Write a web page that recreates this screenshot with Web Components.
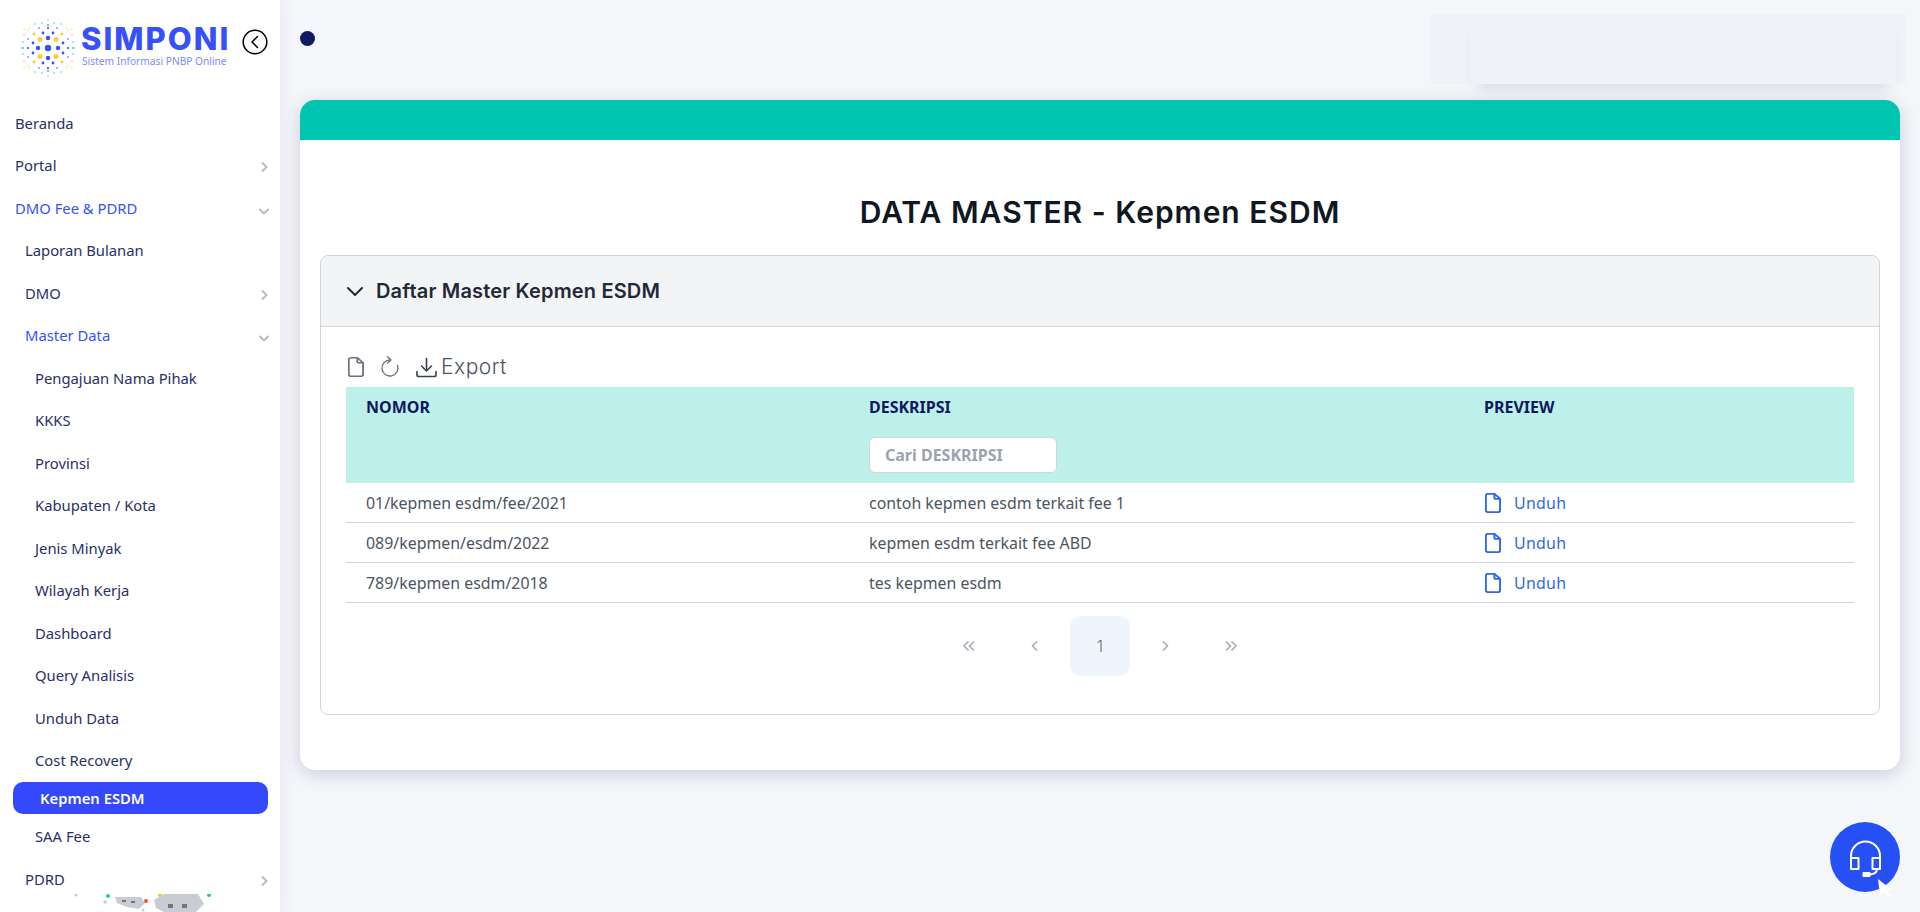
<!DOCTYPE html>
<html lang="id">
<head>
<meta charset="utf-8">
<title>SIMPONI - Kepmen ESDM</title>
<style>
  html, body { margin: 0; height: 912px; overflow: hidden; background: #f5f6fa; }
  body { font-family: "Noto Sans", "Open Sans", sans-serif; }
</style>
</head>
<body>
<app-shell>
  <side-bar slot="side">
    <brand-logo></brand-logo>
    <nav-item>Beranda</nav-item>
    <nav-item arrow="right">Portal</nav-item>
    <nav-item arrow="down" open>DMO Fee &amp; PDRD</nav-item>
    <nav-item level="1">Laporan Bulanan</nav-item>
    <nav-item level="1" arrow="right">DMO</nav-item>
    <nav-item level="1" arrow="down" open>Master Data</nav-item>
    <nav-item level="2">Pengajuan Nama Pihak</nav-item>
    <nav-item level="2">KKKS</nav-item>
    <nav-item level="2">Provinsi</nav-item>
    <nav-item level="2">Kabupaten / Kota</nav-item>
    <nav-item level="2">Jenis Minyak</nav-item>
    <nav-item level="2">Wilayah Kerja</nav-item>
    <nav-item level="2">Dashboard</nav-item>
    <nav-item level="2">Query Analisis</nav-item>
    <nav-item level="2">Unduh Data</nav-item>
    <nav-item level="2">Cost Recovery</nav-item>
    <nav-item level="2" active>Kepmen ESDM</nav-item>
    <nav-item level="2">SAA Fee</nav-item>
    <nav-item level="1" arrow="right">PDRD</nav-item>
  </side-bar>
  <top-bar></top-bar>
  <main-card heading="DATA MASTER - Kepmen ESDM">
    <collapse-panel heading="Daftar Master Kepmen ESDM">
      <table-tools></table-tools>
      <table-head></table-head>
      <data-row nomor="01/kepmen esdm/fee/2021" deskripsi="contoh kepmen esdm terkait fee 1"></data-row>
      <data-row nomor="089/kepmen/esdm/2022" deskripsi="kepmen esdm terkait fee ABD"></data-row>
      <data-row nomor="789/kepmen esdm/2018" deskripsi="tes kepmen esdm"></data-row>
      <page-nav></page-nav>
    </collapse-panel>
  </main-card>
  <support-button></support-button>
</app-shell>

<script>
const FILE_PATH = 'M7.5 2.8h5.6L18 7.7v11.5a2 2 0 0 1-2 2H7.5a2 2 0 0 1-2-2V4.8a2 2 0 0 1 2-2z';
const FOLD_PATH = 'M13 3v3.4a1.4 1.4 0 0 0 1.4 1.4H18';

function define(name, markup, setup) {
  const template = document.createElement('template');
  template.innerHTML = markup;
  customElements.define(name, class extends HTMLElement {
    constructor() {
      super();
      this.attachShadow({ mode: 'open' });
      this.shadowRoot.appendChild(document.importNode(template.content, true));
    }
    connectedCallback() {
      if(setup) setup(this, this.shadowRoot);
    }
  });
}

define('app-shell', /* html */ `
  <style>
    :host { display: grid; grid-template-columns: 280px 1fr; grid-template-rows: 100px auto; height: 912px; }
    ::slotted([slot=side]) { grid-row: 1 / 3; }
    .side { grid-row: 1 / 3; display: block; }
    .rest { display: contents; }
  </style>
  <slot name="side" class="side"></slot>
  <slot class="rest"></slot>
`);

define('side-bar', /* html */ `
  <style>
    :host { display: flex; flex-direction: column; height: 912px; background: #fff; box-shadow: 0 0 18px rgba(40, 45, 90, .08); position: relative; z-index: 2; }
    .list { flex: 1; overflow: hidden; }
    .decor { flex: none; height: 18px; display: block; }
  </style>
  <div class="list"><slot></slot></div>
  <svg class="decor" width="280" height="18" viewBox="0 0 280 18">
    <g fill="#c9ccd2">
      <circle cx="76" cy="1" r="1.5"/><circle cx="105" cy="8" r="1.8"/><circle cx="143" cy="16" r="1.6"/>
      <path d="M115 3h26l4 6-6 6-12-2-10-4z"/>
      <path d="M154 6l10-6h34l6 10-8 8h-32l-8-4z"/>
    </g>
    <g fill="#6f7680">
      <rect x="122" y="6" width="4" height="2"/><rect x="131" y="7" width="4" height="2"/>
      <rect x="168" y="10" width="5" height="4"/><rect x="182" y="10" width="5" height="4"/>
    </g>
    <circle cx="108" cy="2" r="2" fill="#14cfb4"/>
    <circle cx="146" cy="7" r="2" fill="#f0562e"/>
    <circle cx="160" cy="1" r="2" fill="#f5c518"/>
    <circle cx="209" cy="1" r="2" fill="#14cfb4"/>
  </svg>
`);

define('brand-logo', /* html */ `
  <style>
    :host { display: flex; height: 101.5px; box-sizing: border-box; padding: 19px 0 0 19px; }
    svg.mark { flex: none; width: 58px; height: 58px; }
    .name { margin-left: 4px; padding-top: 6px; width: 150px; }
    .big { font: 800 31px/28px Inter, sans-serif; color: #3650fb; letter-spacing: 2px; white-space: nowrap; }
    .small { font: 400 10.2px/14px "Noto Sans", sans-serif; color: #7c8dfb; margin: 1px 0 0 1px; white-space: nowrap; }
    .back { flex: none; margin: 10px 0 0 11px; width: 26px; height: 26px; }
  </style>
  <svg class="mark" viewBox="-29 -29 58 58"></svg>
  <div class="name">
    <div class="big">SIMPONI</div>
    <div class="small">Sistem Informasi PNBP Online</div>
  </div>
  <svg class="back" viewBox="0 0 26 26" fill="none" stroke="#000" stroke-width="1.5">
    <circle cx="13" cy="13" r="11.8"/>
    <path d="M15.5 7.5L10 13l5.5 5.5" stroke-linecap="round" stroke-linejoin="round"/>
  </svg>
`, (el, root) => {
  const blue = '#3650fb', gold = '#ffcb1f', teal = '#2fd6bd', red = '#f49a84', pale = '#f8d77a';
  // one quadrant of the dot pattern, mirrored to the other three
  const quad = [
    [10, 0, 2.2, blue], [0, 10, 2.2, blue],
    [8, 8.6, 2.4, gold],
    [15, 5, 1.4, blue], [5, 15, 1.4, blue],
    [14, 14, 1.4, gold],
    [20, 0, 1.1, blue], [0, 20, 1.1, blue],
    [20, 9, .8, blue], [9, 20, .8, blue],
    [20, 18, .8, pale], [18, 20, .8, pale],
    [25, 0, 1, teal], [0, 23, 1.1, teal],
    [25, 6, .8, teal], [6, 25, .8, teal],
    [24, 13, .7, red], [13, 24, .7, teal],
    [27, 0, .7, red], [0, 28, .8, red],
    [19, 24, .6, pale], [24, 19, .6, red],
  ];
  let dots = '<circle r="3.2" fill="' + blue + '"/>';
  for(const [x, y, r, c] of quad) {
    const signs = [[1, 1], [-1, 1], [1, -1], [-1, -1]];
    const seen = new Set();
    for(const [a, b] of signs) {
      const key = a * x + ',' + b * y;
      if(seen.has(key)) continue;
      seen.add(key);
      dots += `<circle cx="${a * x}" cy="${b * y}" r="${r}" fill="${c}"/>`;
    }
  }
  root.querySelector('.mark').innerHTML = dots;
});

define('nav-item', /* html */ `
  <style>
    :host { display: block; color: #283069; font: 400 14.8px/20px "Noto Sans", sans-serif; }
    .row { display: flex; align-items: center; height: 42.5px; padding-left: 15px; padding-right: 9.8px; }
    :host([level="1"]) .row { padding-left: 25px; }
    :host([level="2"]) .row { padding-left: 35px; }
    :host([open]) { color: #3650fb; }
    :host([active]) { color: #fff; font-weight: 600; }
    :host([active]) .row { height: 32px; margin: .5px 12px .8px 13px; padding-left: 27px; padding-right: 0; border-radius: 10px; background: #3548fb; }
    .text { flex: 1; }
    svg { display: none; width: 12px; height: 12px; margin-top: 4px; }
    :host([arrow]) svg { display: block; }
    :host([arrow="down"]) svg { transform: rotate(90deg); margin-top: 6px; }
  </style>
  <div class="row">
    <span class="text"><slot></slot></span>
    <svg viewBox="0 0 12 12" fill="none" stroke="#b6b8c0" stroke-width="1.8"><path d="M4 1.5L8.5 6 4 10.5"/></svg>
  </div>
`);

define('top-bar', /* html */ `
  <style>
    :host { display: flex; justify-content: space-between; align-items: flex-start; height: 100px; padding-left: 20px; padding-right: 14px; }
    .dot { width: 15px; height: 15px; margin-top: 31px; border-radius: 50%; background: #0f1a62; }
    .ghost { width: 475px; height: 70px; margin-top: 14px; background: #f1f2f7; }
    .inner { width: 426px; height: 70px; margin-left: 39px; background: #f1f2f7; box-shadow: 0 12px 14px -8px rgba(40, 45, 80, .14); }
  </style>
  <div class="dot"></div>
  <div class="ghost"><div class="inner"></div></div>
`);

define('main-card', /* html */ `
  <style>
    :host { display: block; height: 670px; margin: 0 20px; border-radius: 15px; background: #fff; box-shadow: 0 4px 18px rgba(40, 45, 80, .2); overflow: hidden; position: relative; }
    .band { height: 40px; background: #00c6b1; }
    h1 { margin: 0; height: 115px; box-sizing: border-box; padding-top: 54px; text-align: center; font: 600 30px/36px Inter, sans-serif; letter-spacing: 1px; color: #0f1722; }
    .body { padding: 0 20px; }
  </style>
  <div class="band"></div>
  <h1></h1>
  <div class="body"><slot></slot></div>
`, (el, root) => {
  root.querySelector('h1').textContent = el.getAttribute('heading');
});

define('collapse-panel', /* html */ `
  <style>
    :host { display: block; height: 460px; box-sizing: border-box; border: 1px solid #d1d5db; border-radius: 8px; overflow: hidden; }
    .head { display: flex; align-items: center; gap: 12px; height: 70px; padding-left: 25px; background: #f3f4f6; border-bottom: 1px solid #d1d5db; color: #1f2937; font: 600 20px/28px Inter, sans-serif; letter-spacing: .17px; }
    svg { width: 18px; height: 18px; }
    .content { padding: 20px 25px 0; }
  </style>
  <div class="head">
    <svg viewBox="0 0 18 18" fill="none" stroke="#1f2937" stroke-width="2" stroke-linecap="round" stroke-linejoin="round"><path d="M2 6l7 7 7-7"/></svg>
    <span></span>
  </div>
  <div class="content"><slot></slot></div>
`, (el, root) => {
  root.querySelector('span').textContent = el.getAttribute('heading');
});

define('table-tools', /* html */ `
  <style>
    :host { display: flex; align-items: center; height: 40px; padding-left: 2px; color: #4b5563; font: 300 21px/26px Inter, sans-serif; letter-spacing: .5px; }
    svg { flex: none; display: block; }
    .refresh { margin-left: 14px; }
    .export { margin-left: 14px; margin-right: 4px; }
  </style>
  <svg width="16" height="20" viewBox="4.8 2 14 20" preserveAspectRatio="none" fill="none" stroke="#6b7280" stroke-width="1.6" stroke-linejoin="round">
    <path d="${FILE_PATH}"/><path d="${FOLD_PATH}"/>
  </svg>
  <svg class="refresh" width="24" height="24" viewBox="0 0 24 24" fill="none" stroke="#6b7280" stroke-width="1.4" stroke-linecap="round" stroke-linejoin="round">
    <path d="M12 5a8 8 0 1 0 7.6 5.5"/><path d="M9.5 1.8L13 5l-3.5 3"/>
  </svg>
  <svg class="export" width="21" height="21" viewBox="0 0 21 21" fill="none" stroke="#374151" stroke-width="1.6" stroke-linecap="round" stroke-linejoin="round">
    <path d="M10.5 1.5v12"/><path d="M5.5 9l5 5 5-5"/><path d="M1 14.5v3.2a1.8 1.8 0 0 0 1.8 1.8h15.4a1.8 1.8 0 0 0 1.8-1.8v-3.2"/>
  </svg>
  <span>Export</span>
`);

define('table-head', /* html */ `
  <style>
    :host { display: grid; grid-template-columns: 503px 615px 1fr; height: 96px; box-sizing: border-box; padding-top: 9px; background: #bdf0eb; color: #10195e; font: 700 16px/22px "Noto Sans", sans-serif; }
    div { padding-left: 20px; }
    .search { display: block; box-sizing: border-box; width: 188px; height: 36px; margin-top: 19px; padding-left: 15px; background: #fff; border: 1px solid #d1d5db; border-radius: 6px; color: #9ca3af; font: 700 16px/34px "Noto Sans", sans-serif; }
  </style>
  <div>NOMOR</div>
  <div>DESKRIPSI<span class="search">Cari DESKRIPSI</span></div>
  <div>PREVIEW</div>
`);

define('data-row', /* html */ `
  <style>
    :host { display: grid; grid-template-columns: 503px 615px 1fr; align-items: center; height: 40px; box-sizing: border-box; border-bottom: 1px solid #d2d2e0; color: #4b5563; font: 400 15.9px/22px "Noto Sans", sans-serif; }
    div { padding-left: 20px; }
    .link { display: flex; align-items: center; color: #2f69ee; letter-spacing: .3px; }
    svg { flex: none; margin: 0 13px 0 1px; }
  </style>
  <div class="nomor"></div>
  <div class="desk"></div>
  <div class="link">
    <svg width="16" height="20" viewBox="4.8 2 14 20" preserveAspectRatio="none" fill="none" stroke="#2f69ee" stroke-width="1.8" stroke-linejoin="round">
      <path d="${FILE_PATH}"/><path d="${FOLD_PATH}"/>
    </svg>
    Unduh
  </div>
`, (el, root) => {
  root.querySelector('.nomor').textContent = el.getAttribute('nomor');
  root.querySelector('.desk').textContent = el.getAttribute('deskripsi');
});

define('page-nav', /* html */ `
  <style>
    :host { display: flex; justify-content: center; align-items: center; height: 60px; margin-top: 13px; color: #6b7280; font: 300 16px/20px Inter, sans-serif; }
    .cell { display: flex; align-items: center; justify-content: center; width: 66px; height: 60px; color: #a6a9b6; }
    .cur { width: 60px; margin: 0 2px; border-radius: 10px; background: #eff5fd; color: #6b7280; }
    svg { display: block; }
  </style>
  <div class="cell"><svg width="14" height="12" viewBox="0 0 14 12" fill="none" stroke="currentColor" stroke-width="1.5"><path d="M6.5 1.5L2 6l4.5 4.5M12 1.5L7.5 6l4.5 4.5"/></svg></div>
  <div class="cell"><svg width="8" height="12" viewBox="0 0 8 12" fill="none" stroke="currentColor" stroke-width="1.5"><path d="M6 1.5L1.5 6 6 10.5"/></svg></div>
  <div class="cell cur">1</div>
  <div class="cell"><svg width="8" height="12" viewBox="0 0 8 12" fill="none" stroke="currentColor" stroke-width="1.5"><path d="M2 1.5L6.5 6 2 10.5"/></svg></div>
  <div class="cell"><svg width="14" height="12" viewBox="0 0 14 12" fill="none" stroke="currentColor" stroke-width="1.5"><path d="M2 1.5L6.5 6 2 10.5M7.5 1.5L12 6l-4.5 4.5"/></svg></div>
`);

define('support-button', /* html */ `
  <style>
    :host { position: fixed; left: 1830px; top: 822px; width: 70px; height: 70px; z-index: 5; }
    svg { display: block; overflow: visible; }
  </style>
  <svg width="70" height="70" viewBox="0 0 70 70">
    <circle cx="35" cy="35" r="35" fill="#2450f5"/>
    <g fill="none" stroke="#fff" stroke-width="2" stroke-linejoin="round">
      <path d="M21 36v-2a14.5 14.5 0 0 1 29 0v2"/>
      <rect x="21" y="36" width="7.5" height="11"/>
      <rect x="42.5" y="36" width="7.5" height="11"/>
      <path d="M47 47c0 3.5-2 5-7 5.5"/>
    </g>
    <rect x="32.5" y="50" width="8" height="5" rx="1" fill="#fff"/>
    <path d="M48 57l14 11-5 1 4 4-3 2-4-5-4 3z" fill="#fff"/>
  </svg>
`);
</script>
</body>
</html>
